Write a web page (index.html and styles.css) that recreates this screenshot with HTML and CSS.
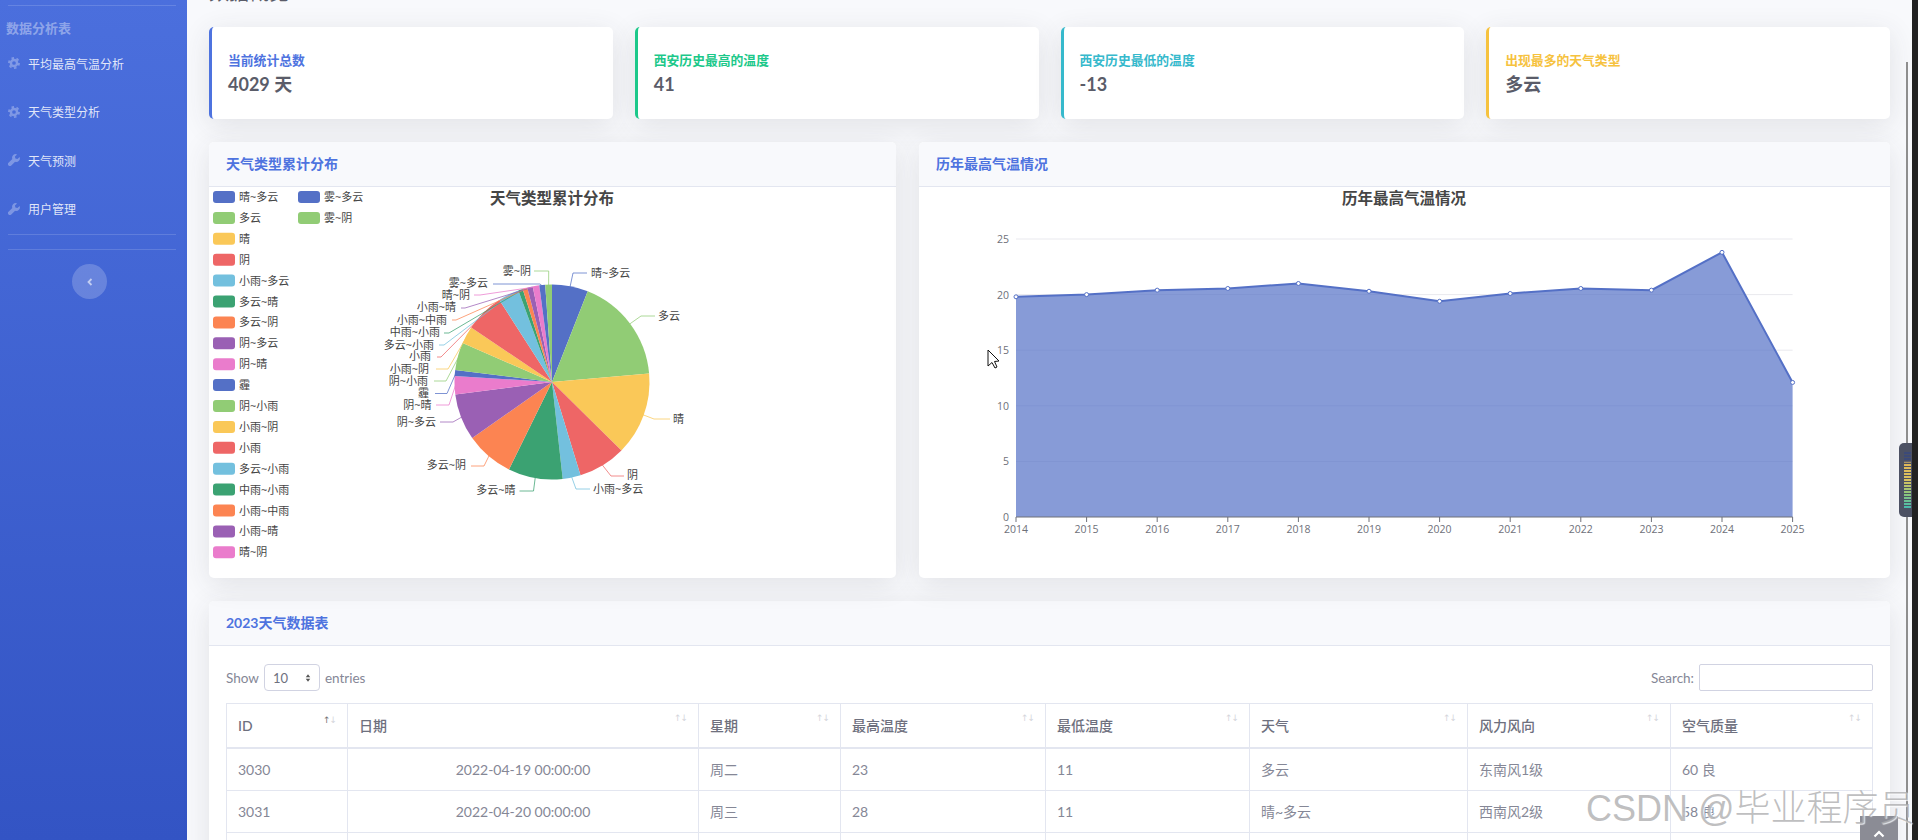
FILE: index.html
```html
<!DOCTYPE html>
<html lang="zh-CN">
<head>
<meta charset="utf-8">
<title>天气数据分析</title>
<link rel="stylesheet" href="styles.css">
</head>
<body>

<svg class="icon-defs" width="0" height="0">
	<symbol id="icon-cog" viewBox="0 0 12 12">
		<circle cx="6" cy="6" r="3.1" fill="none" stroke="currentColor" stroke-width="2.5"/>
		<circle cx="6" cy="6" r="5.1" fill="none" stroke="currentColor" stroke-width="1.7" pathLength="12" stroke-dasharray="1 1"/>
	</symbol>
	<symbol id="icon-wrench" viewBox="0 0 12 12">
		<path fill="currentColor" d="M11.6 2.9 9.4 5.1 7.4 4.6 6.9 2.6 9.1.4A3.6 3.6 0 0 0 4.3 4.9L.5 8.7A1.9 1.9 0 0 0 3.3 11.5L7.1 7.7A3.6 3.6 0 0 0 11.6 2.9Z"/>
	</symbol>
</svg>

<div class="wrapper">
	<nav class="sidebar">
		<hr class="side-rule side-rule-top">
		<div class="side-heading">数据分析表</div>
		<a class="side-link" href="#"><svg class="side-icon"><use href="#icon-cog"/></svg>平均最高气温分析</a>
		<a class="side-link" href="#"><svg class="side-icon"><use href="#icon-cog"/></svg>天气类型分析</a>
		<a class="side-link" href="#"><svg class="side-icon"><use href="#icon-wrench"/></svg>天气预测</a>
		<a class="side-link" href="#"><svg class="side-icon"><use href="#icon-wrench"/></svg>用户管理</a>
		<hr class="side-rule side-rule-a">
		<hr class="side-rule side-rule-b">
		<button class="side-toggle" type="button">
			<svg viewBox="0 0 10 10" width="10" height="10"><path d="M6.5 2 3.5 5l3 3" fill="none" stroke="currentColor" stroke-width="1.8"/></svg>
		</button>
	</nav>

	<main class="content">
		<h1 class="page-title">数据概览</h1>

		<section class="stat-row">
			<div class="stat-card stat-primary">
				<div class="stat-label">当前统计总数</div>
				<div class="stat-value">4029 天</div>
			</div>
			<div class="stat-card stat-success">
				<div class="stat-label">西安历史最高的温度</div>
				<div class="stat-value">41</div>
			</div>
			<div class="stat-card stat-info">
				<div class="stat-label">西安历史最低的温度</div>
				<div class="stat-value">-13</div>
			</div>
			<div class="stat-card stat-warning">
				<div class="stat-label">出现最多的天气类型</div>
				<div class="stat-value">多云</div>
			</div>
		</section>

		<section class="chart-row">
			<div class="panel">
				<div class="panel-head">天气类型累计分布</div>
				<svg id="pie-chart" class="chart" viewBox="209 187 687 391"></svg>
			</div>
			<div class="panel">
				<div class="panel-head">历年最高气温情况</div>
				<svg id="line-chart" class="chart" viewBox="919 187 971 391">
					<polygon points="988,350 988,366 992,362.5 995,368 997,367 994.5,361.5 999,361" fill="#fff" stroke="#111"/>
				</svg>
			</div>
		</section>

		<section class="panel table-panel">
			<div class="panel-head">2023天气数据表</div>
			<div class="table-body">
				<div class="table-tools">
					<label class="tool">Show <span class="fake-select">10<svg viewBox="0 0 8 12" width="6" height="10"><path d="M4 1 7 5H1ZM4 11 1 7H7Z" fill="#555"/></svg></span> entries</label>
					<label class="tool">Search: <span class="fake-input"></span></label>
				</div>
				<table class="data-table">
					<thead>
						<tr>
							<th><div class="th-in">ID<span class="sort"><b>↑</b>↓</span></div></th>
							<th><div class="th-in">日期<span class="sort">↑↓</span></div></th>
							<th><div class="th-in">星期<span class="sort">↑↓</span></div></th>
							<th><div class="th-in">最高温度<span class="sort">↑↓</span></div></th>
							<th><div class="th-in">最低温度<span class="sort">↑↓</span></div></th>
							<th><div class="th-in">天气<span class="sort">↑↓</span></div></th>
							<th><div class="th-in">风力风向<span class="sort">↑↓</span></div></th>
							<th><div class="th-in">空气质量<span class="sort">↑↓</span></div></th>
						</tr>
					</thead>
					<tbody>
						<tr><td>3030</td><td class="date">2022-04-19 00:00:00</td><td>周二</td><td>23</td><td>11</td><td>多云</td><td>东南风1级</td><td>60 良</td></tr>
						<tr><td>3031</td><td class="date">2022-04-20 00:00:00</td><td>周三</td><td>28</td><td>11</td><td>晴~多云</td><td>西南风2级</td><td>58 良</td></tr>
						<tr><td>3032</td><td class="date">2022-04-21 00:00:00</td><td>周四</td><td>26</td><td>12</td><td>多云</td><td>东北风1级</td><td>62 良</td></tr>
					</tbody>
				</table>
			</div>
		</section>
	</main>

	<div class="rail"><div class="rail-thumb"></div></div>
	<div class="edge"></div>

	<div class="meter"></div>
	<a class="back-top" href="#"><svg viewBox="0 0 12 8" width="12" height="8"><path d="M1.5 6.5 6 2l4.500 4.500" fill="none" stroke="#fff" stroke-width="2.200"/></svg></a>
	<div class="watermark">CSDN @毕业程序员</div>
</div>

<script src="charts.js"></script>
</body>
</html>
```

FILE: styles.css
```css
html, body {
	margin: 0;
	height: 100%;
	overflow: hidden;
}

body {
	font-family: Lato, "Noto Sans CJK SC", sans-serif;
	font-size: 13px;
	color: #858796;
	background: #f8f9fc;
}

.icon-defs {
	position: absolute;
}

.wrapper {
	position: relative;
	display: flex;
	height: 840px;
	overflow: hidden;
}

/* sidebar */
.sidebar {
	flex: 0 0 187px;
	background: linear-gradient(180deg, #4b6fdd 0, #3354c4 100%);
}

.side-rule {
	height: 1px;
	margin: 0 11px 0 8px;
	border: 0;
	background: rgba(255, 255, 255, .15);
}

.side-rule-top {
	margin-top: 5px;
}

.side-rule-a {
	margin-top: 1px;
}

.side-rule-b {
	margin-top: 14px;
}

.side-heading {
	margin: 13px 0 2px;
	padding-left: 6px;
	font-size: 13px;
	line-height: 18px;
	font-weight: 700;
	color: rgba(255, 255, 255, .4);
}

.side-link {
	display: flex;
	align-items: center;
	height: 48.500px;
	padding-left: 8px;
	font-size: 12px;
	color: rgba(255, 255, 255, .85);
	text-decoration: none;
}

.side-icon {
	width: 12px;
	height: 12px;
	margin-right: 8px;
	color: rgba(255, 255, 255, .3);
}

.side-toggle {
	display: flex;
	align-items: center;
	justify-content: center;
	width: 35px;
	height: 35px;
	margin: 14px 0 0 72px;
	padding: 0;
	border: 0;
	border-radius: 50%;
	color: rgba(255, 255, 255, .6);
	background: rgba(255, 255, 255, .2);
}

/* main column */
.content {
	flex: 1;
	min-width: 0;
	padding-left: 22px;
}

.page-title {
	height: 24px;
	margin: -20px 0 23px;
	font-size: 20px;
	line-height: 24px;
	font-weight: 400;
	color: #5a5c69;
}

.stat-row {
	display: grid;
	grid-template-columns: repeat(4, 1fr);
	gap: 22px;
}

.stat-card {
	display: flex;
	flex-direction: column;
	justify-content: center;
	height: 92px;
	padding-left: 16px;
	box-sizing: border-box;
	border-left: 3px solid;
	border-radius: 5px;
	background: #fff;
	box-shadow: 0 6px 28px rgba(58, 59, 69, .12);
}

.stat-primary { border-color: #4e73df; color: #4e73df; }
.stat-success { border-color: #1cc88a; color: #1cc88a; }
.stat-info { border-color: #36b9cc; color: #36b9cc; }
.stat-warning { border-color: #f6c23e; color: #f6c23e; }

.stat-label {
	font-size: 12.800px;
	line-height: 18px;
	font-weight: 700;
}

.stat-value {
	margin-top: 3px;
	font-size: 18px;
	line-height: 24px;
	font-weight: 700;
	color: #5a5c69;
}

.chart-row {
	display: grid;
	grid-template-columns: 687px 1fr;
	gap: 23px;
	margin-top: 23px;
}

.panel {
	border-radius: 5px;
	background: #fff;
	box-shadow: 0 6px 28px rgba(58, 59, 69, .12);
}

.panel-head {
	height: 45px;
	padding-left: 17px;
	box-sizing: border-box;
	border-bottom: 1px solid #e3e6f0;
	border-radius: 5px 5px 0 0;
	font-size: 14px;
	line-height: 43px;
	font-weight: 700;
	color: #4e73df;
	background: #f8f9fc;
}

.chart {
	display: block;
	width: 100%;
	height: 391px;
}

.chart text {
	font-family: "Open Sans", "Noto Sans CJK SC", sans-serif;
}

.chart .chart-title {
	font-size: 15.500px;
	font-weight: 700;
	fill: #464646;
	text-anchor: middle;
}

.pie-label, .legend-label {
	font-size: 11px;
	fill: #444;
}

.axis-label {
	font-size: 10.500px;
	fill: #6e7079;
}

/* table */
.table-panel {
	margin-top: 23px;
}

.table-body {
	padding: 18px 17px 0;
}

.table-tools {
	display: flex;
	justify-content: space-between;
	margin-bottom: 12px;
}

.tool {
	display: flex;
	align-items: center;
	gap: 5px;
	height: 27px;
	font-size: 13.500px;
}

.fake-select {
	display: flex;
	align-items: center;
	justify-content: space-between;
	width: 56px;
	height: 27px;
	padding: 0 8px;
	box-sizing: border-box;
	border: 1px solid #d1d3e2;
	border-radius: 4px;
	font-size: 13px;
	color: #6e707e;
	background: #fff;
}

.fake-input {
	width: 174px;
	height: 27px;
	box-sizing: border-box;
	border: 1px solid #d1d3e2;
	border-radius: 2px;
	background: #fff;
}

.data-table {
	width: 1647px;
	table-layout: fixed;
	border-collapse: collapse;
	border: 1px solid #e3e6f0;
	font-size: 14px;
}

.data-table th, .data-table td {
	box-sizing: border-box;
	padding: 0 11px;
	border: 1px solid #e3e6f0;
	text-align: left;
}

.data-table th {
	height: 44px;
	border-bottom-width: 2px;
	font-weight: 500;
	color: #6e707e;
}

.data-table td {
	height: 42.500px;
}

.data-table th:nth-child(1) { width: 121px; }
.data-table th:nth-child(2) { width: 351px; }
.data-table th:nth-child(3) { width: 142px; }
.data-table th:nth-child(4) { width: 205px; }
.data-table th:nth-child(5) { width: 204px; }
.data-table th:nth-child(6) { width: 218px; }
.data-table th:nth-child(7) { width: 203px; }

.data-table .date {
	text-align: center;
}

.th-in {
	display: flex;
	justify-content: space-between;
}

.sort {
	margin-top: -2px;
	font-family: "DejaVu Sans", sans-serif;
	font-size: 9px;
	font-weight: 400;
	letter-spacing: -1px;
	color: #d5d6dc;
}

.sort b {
	font-weight: 400;
	color: #777;
}

/* window edge, overlays */
.rail {
	flex: 0 0 22px;
}

.rail-thumb {
	width: 2px;
	height: 100%;
	margin: 62px 0 0 16px;
	background: #8e8e8e;
}

.edge {
	flex: 0 0 6px;
	background: #222;
}

.meter {
	position: absolute;
	left: 1899px;
	top: 443px;
	width: 13px;
	height: 74px;
	border-radius: 5px 0 0 5px;
	background: #4c5163;
}

.meter::before {
	content: "";
	position: absolute;
	left: 5px;
	top: 9px;
	width: 7px;
	height: 56px;
	background:
		repeating-linear-gradient(180deg, transparent 0, transparent 2px, #4c5163 2px, #4c5163 3px),
		linear-gradient(180deg, #3c4a78 0, #3c4a78 16%, #e0b858 20%, #d9c25f 50%, #8cc77c 75%, #46b9ae 100%);
}

.back-top {
	position: absolute;
	left: 1860px;
	top: 816px;
	display: flex;
	justify-content: center;
	align-items: flex-end;
	width: 38px;
	height: 24px;
	padding-bottom: 2px;
	box-sizing: border-box;
	background: #8b8c95;
}

.watermark {
	position: absolute;
	left: 1586px;
	top: 784px;
	font-family: "Liberation Sans", "Noto Sans CJK SC", sans-serif;
	font-size: 36px;
	line-height: 50px;
	font-weight: 300;
	white-space: nowrap;
	color: rgba(170, 170, 172, .75);
	text-shadow: 1px 1px 1px rgba(255, 255, 255, .8);
}
```

FILE: charts.js
```javascript
var NS = "http://www.w3.org/2000/svg";
var COLORS = ["#5470c6", "#91cc75", "#fac858", "#ee6666", "#73c0de", "#3ba272", "#fc8452", "#9a60b4", "#ea7ccc"];

function add(svg, tag, attrs, text) {
	var el = document.createElementNS(NS, tag);
	for (var k in attrs) el.setAttribute(k, attrs[k]);
	if (text !== undefined) el.textContent = text;
	svg.appendChild(el);
	return el;
}

// name, end angle, label x, label y, elbow x, elbow y, line end x
var PIE = [
	["晴~多云", 21.5, 591, 273, 573, 273, 587],
	["多云", 85, 658, 316, 641, 316, 655],
	["晴", 134.6, 673, 419, 654, 419, 670],
	["阴", 163, 627, 475, 611, 476, 624],
	["小雨~多云", 173.7, 593, 489, 576, 489, 590],
	["多云~晴", 206.2, 515.5, 490, 533.5, 491, 519.5],
	["多云~阴", 234.9, 466, 465, 484, 466, 471],
	["阴~多云", 262.7, 436, 422, 453, 422, 440],
	["阴~晴", 273.5, 431.5, 404.5, 449, 405, 436],
	["霾", 277, 429, 393, 447, 393.5, 435],
	["阴~小雨", 293.6, 428, 380.5, 446, 381, 434],
	["小雨~阴", 304, 429, 368.6, 448, 369, 436],
	["小雨", 327.3, 431, 356, 441, 357, 437],
	["多云~小雨", 339.8, 434, 344.6, 444, 345, 439],
	["中雨~小雨", 342.5, 440, 332, 449, 333, 444],
	["小雨~中雨", 345.3, 447, 320, 456, 320, 452],
	["小雨~晴", 348.6, 456, 307, 465, 308, 461],
	["晴~阴", 352.5, 470, 295, 480, 295, 474],
	["雾~多云", 356, 488, 283, 540, 284, 493],
	["雾~阴", 360, 531, 271, 548.7, 271, 534]
];

function drawPie() {
	var svg = document.getElementById("pie-chart");
	var cx = 552, cy = 382, r = 97.5;
	add(svg, "text", { "class": "chart-title", x: cx, y: 204 }, "天气类型累计分布");

	function point(deg, rad) {
		var a = deg * Math.PI / 180;
		return [cx + rad * Math.sin(a), cy - rad * Math.cos(a)];
	}

	var start = 0;
	PIE.forEach(function (d, i) {
		var color = COLORS[i % COLORS.length];
		var from = point(start, r), to = point(d[1], r);
		var edge = point((start + d[1]) / 2, r - 1);

		// guide line first so the slices cover its root
		add(svg, "polyline", {
			points: edge.join(",") + " " + d[4] + "," + d[5] + " " + d[6] + "," + d[5],
			fill: "none", stroke: color, "stroke-width": 1, opacity: .75
		});
		add(svg, "text", {
			"class": "pie-label", x: d[2], y: d[3] + 4,
			"text-anchor": d[2] > cx ? "start" : "end"
		}, d[0]);

		var large = d[1] - start > 180 ? 1 : 0;
		add(svg, "path", {
			d: "M" + cx + " " + cy + "L" + from.join(" ") + "A" + r + " " + r + " 0 " + large + " 1 " + to.join(" ") + "Z",
			fill: color
		});

		// legend: 18 rows, then the last two start a second column
		var row = i < 18 ? i : i - 18;
		var lx = i < 18 ? 213 : 298;
		var ly = 197 + row * 20.9;
		add(svg, "rect", { x: lx, y: ly - 6, width: 22, height: 12, rx: 3, fill: color });
		add(svg, "text", { "class": "legend-label", x: lx + 26, y: ly + 4 }, d[0]);

		start = d[1];
	});
}

function drawLine() {
	var svg = document.getElementById("line-chart");
	var values = [19.8, 20, 20.4, 20.55, 21, 20.3, 19.4, 20.1, 20.55, 20.4, 23.8, 12.1];
	var x0 = 1016, step = 70.6, y0 = 517, unit = 11.12;
	add(svg, "text", { "class": "chart-title", x: 1404, y: 204 }, "历年最高气温情况");

	for (var t = 0; t <= 25; t += 5) {
		var gy = y0 - t * unit;
		if (t > 0) add(svg, "line", { x1: x0, x2: x0 + 11 * step, y1: gy, y2: gy, stroke: "#e9e9ee" });
		add(svg, "text", { "class": "axis-label", x: 1009, y: gy + 4, "text-anchor": "end" }, t);
	}

	var pts = values.map(function (v, i) {
		return (x0 + i * step) + "," + (y0 - v * unit);
	});
	add(svg, "polygon", {
		points: x0 + "," + y0 + " " + pts.join(" ") + " " + (x0 + 11 * step) + "," + y0,
		fill: "#5470c6", "fill-opacity": .7
	});
	add(svg, "polyline", { points: pts.join(" "), fill: "none", stroke: "#5470c6", "stroke-width": 2 });
	add(svg, "line", { x1: x0, x2: x0 + 11 * step, y1: y0, y2: y0, stroke: "#6e7079" });

	values.forEach(function (v, i) {
		var x = x0 + i * step;
		add(svg, "circle", { cx: x, cy: y0 - v * unit, r: 2, fill: "#fff", stroke: "#5470c6" });
		add(svg, "line", { x1: x, x2: x, y1: y0, y2: y0 + 5, stroke: "#6e7079" });
		add(svg, "text", { "class": "axis-label", x: x, y: 533, "text-anchor": "middle" }, 2014 + i);
	});
}

drawPie();
drawLine();
```
